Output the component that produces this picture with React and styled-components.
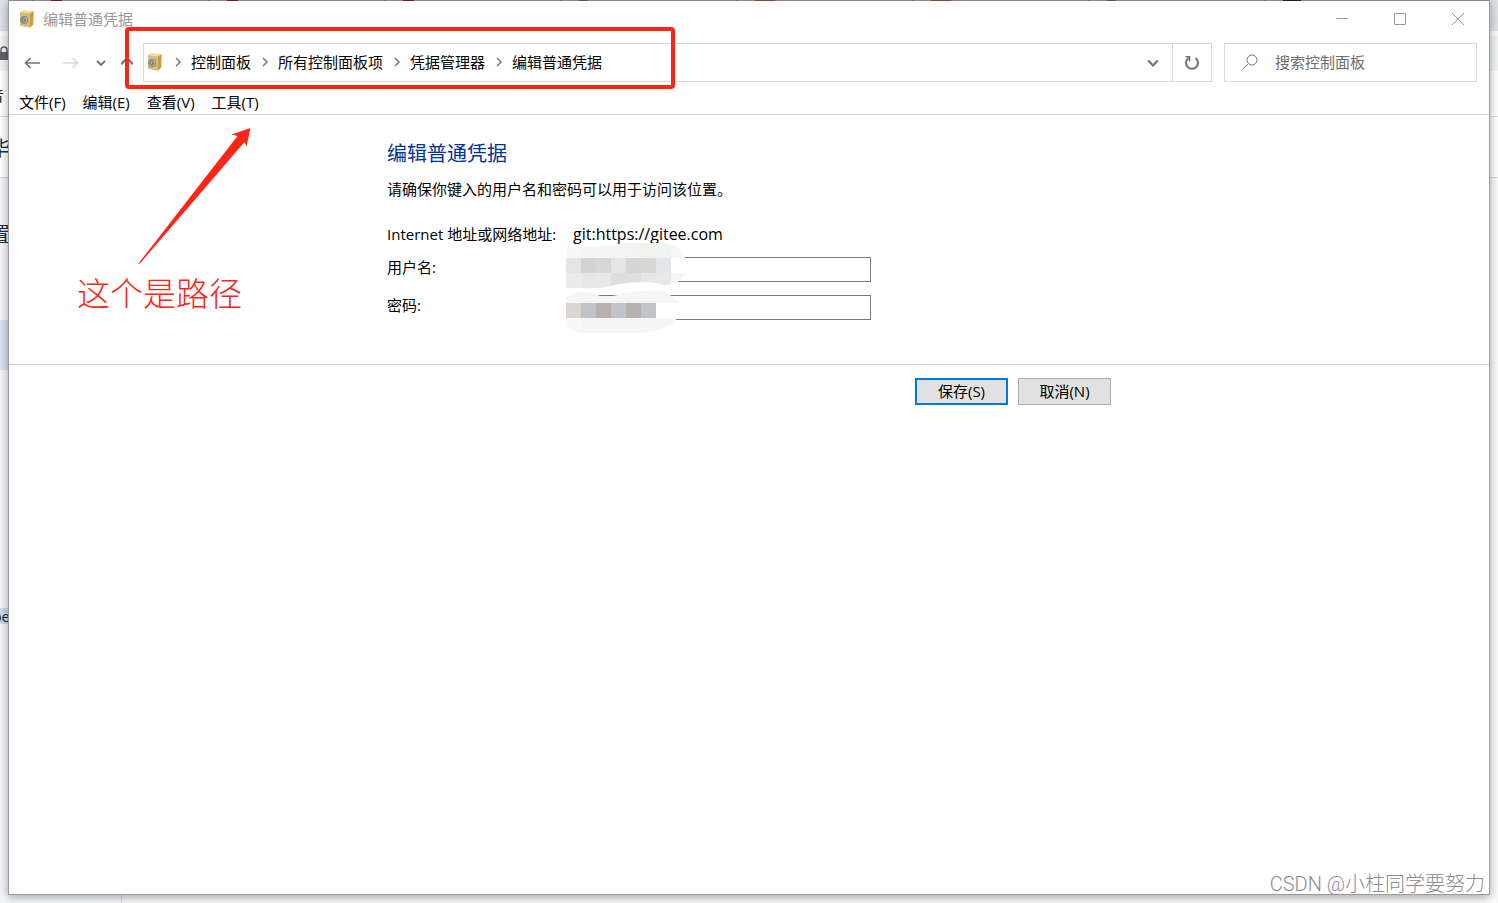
import { useState } from 'react'
import styled, { createGlobalStyle, css } from 'styled-components'

const crumbs = ['控制面板', '所有控制面板项', '凭据管理器', '编辑普通凭据'];
const menus = ['文件(F)', '编辑(E)', '查看(V)', '工具(T)'];

// Favicon colour and width of each browser tab behind the window
const tabs = [
    ['#b3294e', 11], ['#b3294e', 11], ['#b3294e', 11], ['#8f8ae0', 9],
    ['#f5694a', 20], ['#f5694a', 20], ['#8f8ae0', 9], ['#2c2c3c', 18],
];

// Colours of the pixelated cells, one array per row, 45 units a cell
const userCells = [
    ['#f7f7f7', '#f5f5f5', '#f5f5f5', '#f5f5f4', '#f4f4f4', '#f2f3f0', '#f2f4f4', '#f5f6f6'],
    ['#e4e4e4', '#d3d3d3', '#d9d7d6', '#e3e5e7', '#d6d6d6', '#d8d8d4', '#e3e5e8', '#ffffff'],
    ['#ebebe9', '#e8e8e8', '#e9e9e9', '#dddfdf', '#dfdfdf', '#e8e7e4', '#e7e9eb', '#f5f5f5'],
];
const passCells = [
    ['#f5f5f5', '#f5f5f5', '#f5f5f5', '#f5f5f5', '#f5f5f5', '#f5f5f5', '#f5f5f5', '#f5f5f5'],
    ['#dad6d3', '#c1c5c9', '#b7b2af', '#c1c5c9', '#b7b2af', '#c1c5c9', '#ffffff', '#ffffff'],
    ['#f8f8f8', '#f5f5f5', '#f5f5f5', '#f5f5f5', '#f5f5f5', '#f5f5f5', '#f5f5f5', '#f5f5f5'],
];

function SafeIcon() {
    return (
        <svg width="16" height="18" viewBox="0 0 16 18" aria-hidden="true">
            <path d="M1 2.5 4.5 0.5 14.5 1.5 14.2 14.5 11 17.5 1 15.5Z" fill="#d9b65c" />
            <path d="M1 2.5 4.5 0.5 14.5 1.5 11 3.7Z" fill="#f0dc95" />
            <path d="M11 3.7 14.5 1.5 14.2 14.5 11 17.5Z" fill="#c99f3a" />
            <path d="M1 2.5 11 3.7V17.5L1 15.5Z" fill="#d3bb7c" />
            <circle cx="5.2" cy="10" r="4" fill="#8b887f" />
            <circle cx="5.2" cy="10" r="2.5" fill="#b9b7b0" stroke="#e4e2dc" strokeWidth="0.8" />
            <path d="M6.2 8.2A2 2 0 1 0 6.8 11M5 10H7.5" fill="none" stroke="#45443f" strokeWidth="0.9" />
        </svg>
    )
}

function Arrow({ flip }) {
    return (
        <svg width="16" height="12" viewBox="0 0 16 12" fill="none" stroke="currentColor" strokeWidth="1.6" aria-hidden="true">
            <path d={flip ? 'M0 6H14.5M9.5 1 14.5 6 9.5 11' : 'M16 6H1.5M6.5 1 1.5 6 6.5 11'} />
        </svg>
    )
}

function Chevron({ d, size = 10, weight = 1.8 }) {
    return (
        <svg width={size} height={size} viewBox="0 0 10 10" fill="none" stroke="currentColor" strokeWidth={weight} aria-hidden="true">
            <path d={d} />
        </svg>
    )
}

function Cells({ rows, top }) {
    return rows.map((row, y) => row.map((fill, x) => (
        <rect key={`${x}-${y}`} x={x * 45} y={top + y * 45} width="45" height="45" fill={fill} shapeRendering="crispEdges" />
    )))
}

export default function App() {
    const [user, setUser] = useState('');
    const [password, setPassword] = useState('');

    return (
        <Desktop>
            <GlobalStyle />
            <Backdrop aria-hidden="true">
                <TabStrip>
                    {tabs.map(([color, width], i) => (
                        <Tab key={i}><Favicon $color={color} $w={width} /></Tab>
                    ))}
                </TabStrip>
                <Toolbar>
                    <svg width="9" height="14" viewBox="0 0 9 14">
                        <path d="M1 6V4a3 3 0 0 1 6 0V6" fill="none" stroke="#5f6368" strokeWidth="1.5" />
                        <rect x="-2" y="6" width="10" height="8" fill="#5f6368" />
                    </svg>
                </Toolbar>
                <Strip $h={46}><Clipped $w={4}>音</Clipped></Strip>
                <Strip $h={61}><Clipped $w={10} $large>毕</Clipped></Strip>
                <Page>
                    <Strip $h={110} $plain><Clipped $w={10} $large>置</Clipped></Strip>
                    <Gap />
                    <Selected />
                    <Tag><Clipped $w={10}>be</Clipped></Tag>
                </Page>
            </Backdrop>

            <Window>
                <TitleBar>
                    <SafeIcon />
                    <Title>编辑普通凭据</Title>
                    <WindowButton aria-label="最小化">
                        <svg width="12" height="12" viewBox="0 0 12 12"><path d="M0 5.5H12" stroke="#999" /></svg>
                    </WindowButton>
                    <WindowButton aria-label="最大化">
                        <svg width="12" height="12" viewBox="0 0 12 12"><path d="M.5.5H11.5V11.5H.5Z" fill="none" stroke="#999" /></svg>
                    </WindowButton>
                    <WindowButton aria-label="关闭">
                        <svg width="12" height="12" viewBox="0 0 12 12"><path d="M0 0 12 12M12 0 0 12" stroke="#999" /></svg>
                    </WindowButton>
                </TitleBar>

                <NavBar>
                    <NavButtons>
                        <NavButton $w={46} aria-label="后退"><Arrow /></NavButton>
                        <NavButton $w={32} $off aria-label="前进"><Arrow flip /></NavButton>
                        <NavButton $w={28} aria-label="最近浏览的位置"><Chevron d="M1 3 5 7 9 3" /></NavButton>
                        <NavButton $w={24} aria-label="向上"><Chevron d="M0 6 5 1 10 6" size={12} /></NavButton>
                    </NavButtons>
                    <AddressBar>
                        <SafeIcon />
                        <Crumbs>
                            {crumbs.map(name => (
                                <li key={name}>
                                    <Chevron d="M3 1 7 5 3 9" weight={1.5} />
                                    <a href="#path">{name}</a>
                                </li>
                            ))}
                        </Crumbs>
                        <BarButton aria-label="以前的位置"><Chevron d="M1 3 5 7 9 3" size={12} /></BarButton>
                        <BarButton $line aria-label="刷新">
                            <svg width="16" height="16" viewBox="0 0 16 16" fill="none" stroke="currentColor" strokeWidth="2" aria-hidden="true">
                                <path d="M11.5 3A6 6 0 1 1 4.5 3" />
                                <path d="M1.5 1.8H5.5V6.5" strokeWidth="1.6" />
                            </svg>
                        </BarButton>
                    </AddressBar>
                    <SearchBox>
                        <svg width="16" height="16" viewBox="0 0 16 16" fill="none" stroke="#777" aria-hidden="true">
                            <circle cx="10" cy="6" r="5" />
                            <path d="M6.3 9.7.5 15.5" />
                        </svg>
                        <input type="search" aria-label="搜索控制面板" placeholder="搜索控制面板" />
                    </SearchBox>
                </NavBar>

                <MenuBar>
                    {menus.map(name => <button key={name}>{name}</button>)}
                </MenuBar>

                <Form onSubmit={e => e.preventDefault()}>
                    <Content>
                        <h1>编辑普通凭据</h1>
                        <p>请确保你键入的用户名和密码可以用于访问该位置。</p>
                        <Fields>
                            <span>Internet 地址或网络地址:</span>
                            <Address>git:https://gitee.com</Address>
                            <label htmlFor="user">用户名:</label>
                            <TextInput id="user" value={user} onChange={e => setUser(e.target.value)} />
                            <label htmlFor="password">密码:</label>
                            <TextInput id="password" type="password" value={password} onChange={e => setPassword(e.target.value)} />
                            <Mosaic width="120" height="92" viewBox="0 6 360 276" aria-hidden="true">
                                <clipPath id="userBlob">
                                    <path d="M0 27Q30 20 90 20L185 8H290Q345 16 357 54L315 54V99H357Q345 125 325 130Q300 142 272 129L240 126Q190 126 150 134Q120 145 60 145L0 143Z M315 54H357V99H315Z" />
                                </clipPath>
                                <clipPath id="passBlob">
                                    <path d="M0 172Q20 155 50 155Q75 157 100 167Q125 172 160 164Q210 150 285 152Q315 160 336 189L333 234Q320 265 265 272L225 279H45Q15 275 0 258Z" />
                                </clipPath>
                                <g clipPath="url(#userBlob)"><Cells rows={userCells} top={9} /></g>
                                <g clipPath="url(#passBlob)"><Cells rows={passCells} top={144} /></g>
                            </Mosaic>
                        </Fields>
                    </Content>
                    <Footer>
                        <Buttons>
                            <PushButton $primary type="submit">保存(S)</PushButton>
                            <PushButton type="button">取消(N)</PushButton>
                        </Buttons>
                    </Footer>
                </Form>
            </Window>

            <RedFrame />
            <RedArrow width="116" height="140" viewBox="0 0 116 140" aria-hidden="true">
                <path d="M0.5 136.5 99.5 9 93.5 7.5 112.5 1 108.5 19.5 106.5 15 1.5 137Z" fill="#ff2414" />
            </RedArrow>
            <RedNote>这个是路径</RedNote>
            <Watermark>CSDN @小柱同学要努力</Watermark>
        </Desktop>
    )
}

const GlobalStyle = createGlobalStyle`
    * {
        box-sizing: border-box;
    }

    body {
        margin: 0;
        font-family: "Open Sans", "Noto Sans CJK SC", sans-serif;
        font-size: 15px;
        line-height: 20px;
        color: #000;
    }

    button, input {
        font: inherit;
        color: inherit;
    }

    button {
        border: none;
        background: none;
        padding: 0;
    }

    svg {
        display: block;
        flex: none;
    }
`;

const Desktop = styled.div`
    position: relative;
    display: flex;
    min-height: 100vh;
    padding: 0 8px 8px;
    overflow: hidden;
`;

// The browser that shows round the edges of the window
const Backdrop = styled.div`
    position: absolute;
    inset: 0;
    display: flex;
    flex-direction: column;
    background: #fff;
    color: #222b3c;
`;

const TabStrip = styled.div`
    display: flex;
    height: 31px;
    padding-left: 32px;
    overflow: hidden;
    background: #dee1e6;
`;

const Tab = styled.div`
    flex: none;
    width: 176px;
    padding-left: 18px;
    border-left: 1px solid #9a9da2;
`;

const Favicon = styled.div`
    width: ${p => p.$w}px;
    height: 16px;
    background: ${p => p.$color};
`;

const Toolbar = styled.div`
    height: 40px;
    padding-top: 10px;
    border-top: 5px solid #fafafa;
    background: #f1f3f4;
`;

const Strip = styled.div`
    display: flex;
    align-items: center;
    height: ${p => p.$h}px;
    padding-top: 3px;
    border-bottom: ${p => p.$plain ? 'none' : '1px solid #d6dbe2'};
`;

const Clipped = styled.span`
    display: flex;
    justify-content: flex-end;
    width: ${p => p.$w}px;
    font-size: ${p => p.$large ? 20 : 15}px;
`;

const Page = styled.div`
    flex: 1;
    background: linear-gradient(to right, #f3f5f9 121px, #dcdfe4 121px 122px, #fafafa 122px);
`;

const Gap = styled.div`
    height: 32px;
`;

const Selected = styled.div`
    width: 121px;
    height: 50px;
    margin-bottom: 238px;
    background: #dce3ee;
`;

const Tag = styled.div`
    width: 20px;
    height: 16px;
    line-height: 16px;
    background: #d0d8e3;
`;

const Window = styled.main`
    position: relative;
    flex: 1;
    display: flex;
    flex-direction: column;
    border: 1px solid #9b9b9b;
    border-top-color: rgba(0, 0, 0, 0.3);
    background: #fff;
    background-clip: padding-box;
    box-shadow: 0 2px 9px rgba(0, 0, 0, 0.35);
`;

const TitleBar = styled.header`
    display: flex;
    align-items: center;
    height: 36px;
    padding: 0 2px 0 10px;
`;

const Title = styled.span`
    flex: 1;
    padding-left: 8px;
    color: #999;
`;

const WindowButton = styled.button`
    display: flex;
    align-items: center;
    justify-content: center;
    width: 58px;
    height: 36px;
`;

const NavBar = styled.nav`
    display: flex;
    height: 52px;
    padding: 6px 12px 7px 0;
`;

const NavButtons = styled.div`
    display: flex;
    width: 134px;
`;

const NavButton = styled.button`
    display: flex;
    align-items: center;
    justify-content: center;
    width: ${p => p.$w}px;
    color: ${p => p.$off ? '#dadada' : '#707070'};
`;

const AddressBar = styled.div`
    flex: 1;
    display: flex;
    align-items: center;
    margin-right: 12px;
    padding: 0 0 2px 3px;
    border: 1px solid #d9d9d9;
`;

const Crumbs = styled.ol`
    flex: 1;
    display: flex;
    margin: 0;
    padding: 0 0 0 10px;
    list-style: none;

    li {
        display: flex;
        align-items: center;
        gap: 8px;
        padding-right: 9px;
        color: #777;
    }

    a {
        color: #000;
        text-decoration: none;
    }
`;

const BarButton = styled.button`
    display: flex;
    align-items: center;
    justify-content: center;
    height: 37px;
    width: 39px;
    margin-bottom: -2px;
    color: #707070;
    ${p => p.$line && css`border-left: 1px solid #d9d9d9;`}
`;

const SearchBox = styled.div`
    display: flex;
    align-items: center;
    gap: 17px;
    width: 253px;
    padding: 0 0 2px 17px;
    border: 1px solid #d9d9d9;

    input {
        flex: 1;
        min-width: 0;
        padding: 0;
        border: none;
        outline: none;
        background: none;
    }

    input::placeholder {
        color: #6d6d6d;
    }
`;

const MenuBar = styled.div`
    display: flex;
    gap: 17px;
    height: 26px;
    padding: 0 10px;
    border-bottom: 1px solid #d9d9d9;
`;

const Form = styled.form`
    flex: 1;
`;

const Content = styled.div`
    max-width: 724px;
    height: 249px;
    margin: 0 auto;
    padding-top: 25px;

    h1 {
        margin: 0 0 11px;
        font-size: 20px;
        font-weight: 400;
        line-height: 28px;
        color: #003399;
    }

    p {
        margin: 0 0 25px;
    }
`;

const Fields = styled.div`
    position: relative;
    display: grid;
    grid-template-columns: 186px 298px;
    row-gap: 13px;
    line-height: 20px;
`;

const Address = styled.span`
    font-size: 16px;
`;

const TextInput = styled.input`
    height: 25px;
    padding: 0 4px;
    border: 1px solid #7a7a7a;
    border-radius: 0;
    background: #fff;
`;

const Mosaic = styled.svg`
    position: absolute;
    top: 18px;
    left: 179px;
`;

const Footer = styled.footer`
    padding-top: 13px;
    border-top: 1px solid #ccc;
`;

const Buttons = styled.div`
    display: flex;
    justify-content: flex-end;
    gap: 10px;
    max-width: 724px;
    margin: 0 auto;
`;

const PushButton = styled.button`
    width: 93px;
    height: 27px;
    padding-bottom: 2px;
    border: ${p => p.$primary ? '2px solid #0078d7' : '1px solid #adadad'};
    background: #e1e1e1;
`;

const RedFrame = styled.div`
    position: absolute;
    top: 27px;
    left: 125px;
    width: 550px;
    height: 62px;
    border: 4px solid #ff2414;
    border-radius: 4px;
    pointer-events: none;
`;

const RedArrow = styled.svg`
    position: absolute;
    top: 127px;
    left: 138px;
`;

const RedNote = styled.div`
    position: absolute;
    top: 272px;
    left: 77px;
    font-size: 33px;
    font-weight: 300;
    line-height: 44px;
    color: #ff2414;
`;

const Watermark = styled.div`
    position: absolute;
    right: 13px;
    bottom: 6px;
    font-family: Roboto, "Noto Sans CJK SC", sans-serif;
    font-size: 20px;
    font-weight: 300;
    line-height: 26px;
    color: #8c8c8c;
`;
